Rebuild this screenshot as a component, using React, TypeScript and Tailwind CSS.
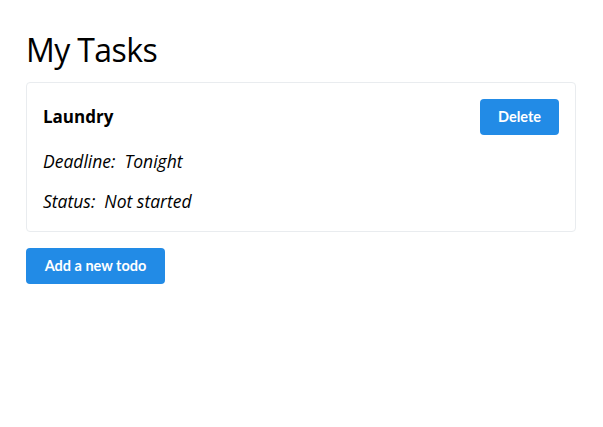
export default function App() {
  return (
    <div className="min-h-screen bg-white px-[26px] pt-[28px] text-black" style={{ fontFamily: '"Open Sans", "Noto Sans", sans-serif' }}>
      <h1 className="text-[32px] leading-[44px] font-normal tracking-[-0.6px] mb-[10px]">My Tasks</h1>

      <div className="w-[550px] border border-[#e9ecef] rounded-[4px] px-[16px] pt-[16px] pb-[18px]">
        <div className="flex items-center justify-between">
          <h2 className="text-[17px] font-bold">Laundry</h2>
          <button className="h-[36px] w-[79px] rounded-[4px] bg-[#228be6] text-white text-[14.5px] font-bold font-['Lato',sans-serif]">
            Delete
          </button>
        </div>
        <p className="italic text-[17.5px] leading-[24px] mt-[14px]">Deadline:&nbsp; Tonight</p>
        <p className="italic text-[17.5px] leading-[24px] mt-[16px]">Status:&nbsp; Not started</p>
      </div>

      <button className="mt-[16px] h-[36px] w-[139px] rounded-[4px] bg-[#228be6] text-white text-[14.5px] font-bold font-['Lato',sans-serif]">
        Add a new todo
      </button>
    </div>
  );
}
